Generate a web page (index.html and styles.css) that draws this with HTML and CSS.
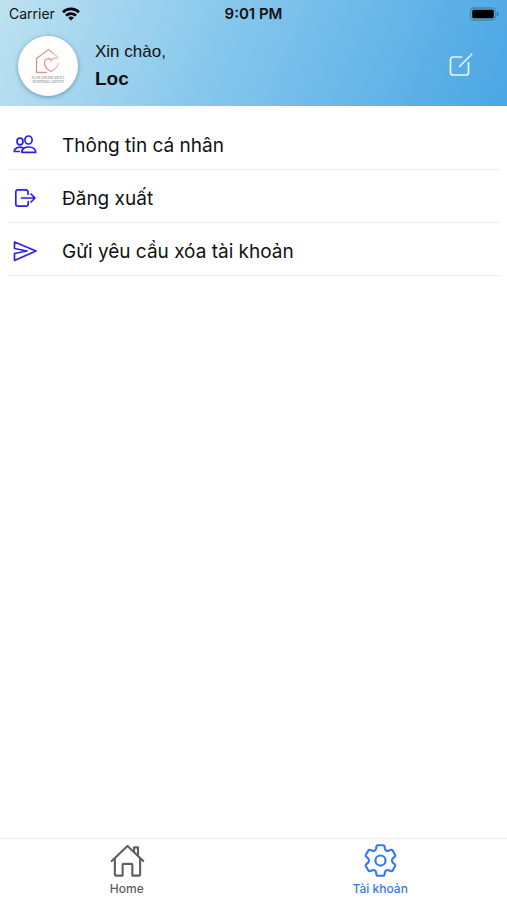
FILE: index.html
```html
<!DOCTYPE html>
<html lang="vi">
<head>
<meta charset="utf-8">
<meta name="viewport" content="width=device-width, initial-scale=1">
<title>Tài khoản</title>
<link rel="stylesheet" href="styles.css">
</head>
<body>
<header class="header">
  <div class="status">
    <div class="carrier">
      <span>Carrier</span>
      <svg width="18" height="14" viewBox="0 0 18 14" fill="none" stroke="#000" stroke-width="2.6" aria-hidden="true">
        <path d="M1 5.2a11.4 11.4 0 0 1 16 0"/>
        <path d="M4 8.6a7.2 7.2 0 0 1 10 0"/>
        <path d="M9 13.6 6.2 10.8a4 4 0 0 1 5.6 0z" fill="#000" stroke="none"/>
      </svg>
    </div>
    <time class="clock">9:01 PM</time>
    <div class="battery">
      <svg width="30" height="14" viewBox="0 0 30 14" aria-hidden="true">
        <rect x="1.500" y="1" width="25" height="12" rx="3.5" fill="none" stroke="#4a86a8" stroke-width="1.3"/>
        <rect x="3.200" y="2.700" width="21.600" height="8.600" rx="1.600" fill="#000"/>
        <path d="M28 4.800a2.400 2.400 0 0 1 0 4.400z" fill="#386f8f"/>
      </svg>
    </div>
  </div>
  <div class="profile">
    <div class="avatar">
      <svg width="60" height="60" viewBox="0 0 60 60" role="img" aria-label="Kindergarten">
        <defs>
          <linearGradient id="rose" gradientUnits="userSpaceOnUse" x1="18" y1="0" x2="43" y2="0"><stop offset="0" stop-color="#dd8f8f"/><stop offset=".6" stop-color="#e89a9a"/><stop offset="1" stop-color="#f9e4e4"/></linearGradient>
        </defs>
        <g fill="none" stroke="url(#rose)" stroke-width="1.3">
          <path d="M29 36.500H18.500V22.500L30.500 13.500 41 22"/>
          <path d="M33 35.500c-3.500-2-6.500-5-6.500-8.500 0-4.500 5-6 7-2.500 1.500-2.500 4-3 6.500-1.500"/>
          <path d="M33 35.500c4-2 7-5 8-9"/>
        </g>
        <text x="30" y="43" class="logo-text">HANATUDE BETA</text>
        <text x="30" y="47" class="logo-text">KINDERGARTEN</text>
      </svg>
    </div>
    <div class="greeting">
      <p class="hello">Xin chào,</p>
      <p class="name">Loc</p>
    </div>
    <button class="edit" type="button" aria-label="Chỉnh sửa">
      <svg width="26" height="26" viewBox="0 0 26 26" fill="none" stroke="#e6f4fc" stroke-width="1.700" stroke-linecap="round" stroke-linejoin="round">
        <path d="M14.500 5H6a2.500 2.500 0 0 0-2.500 2.500v13A2.500 2.500 0 0 0 6 23h13a2.500 2.500 0 0 0 2.500-2.500V10.500"/>
        <path d="M12.500 14.500 23 4M24.200 2.700l.5-.5"/>
      </svg>
    </button>
  </div>
</header>

<main class="menu">
  <a class="row" href="#profile">
    <svg class="row-icon" viewBox="0 0 24 24" aria-hidden="true">
      <ellipse cx="15.500" cy="7" rx="3.600" ry="4"/>
      <path d="M8.800 19.300c0-3.600 3.200-5.300 6.800-5.300s6.900 1.700 7.100 5.300z"/>
      <ellipse cx="7" cy="8.500" rx="3" ry="3.300"/>
      <path d="M9.800 14.800C6 13.300 1.300 14.800 1.300 18.500h5"/>
    </svg>
    <span>Thông tin cá nhân</span>
  </a>
  <a class="row" href="#logout">
    <svg class="row-icon" viewBox="0 0 24 24" aria-hidden="true">
      <path d="M15 8.300V6a2.200 2.200 0 0 0-2.200-2.200H5A2.200 2.200 0 0 0 2.800 6v12A2.200 2.200 0 0 0 5 20.200h8a2.200 2.200 0 0 0 2.200-2.200v-2.300"/>
      <path d="M8.500 12h13.200M18 8l4 4-4 4"/>
    </svg>
    <span>Đăng xuất</span>
  </a>
  <a class="row" href="#delete">
    <svg class="row-icon" viewBox="0 0 24 24" aria-hidden="true">
      <path d="M1.500 3 23 12 1.500 21.500V14.500L14 12 1.500 9.500z"/>
    </svg>
    <span>Gửi yêu cầu xóa tài khoản</span>
  </a>
</main>

<nav class="tabs">
  <a class="tab" href="#home">
    <svg width="36" height="36" viewBox="0 0 36 36" fill="none" stroke="currentColor" stroke-width="2.2" stroke-linecap="round" stroke-linejoin="round" aria-hidden="true">
      <path d="M2.300 18.500 18.500 3l16.200 15.500"/>
      <path d="M5.500 16v16.500a1 1 0 0 0 1 1h7V22.500a1 1 0 0 1 1-1h8a1 1 0 0 1 1 1v11h7a1 1 0 0 0 1-1V16"/>
      <path d="M25.300 8.500V4.500h4V12.500"/>
    </svg>
    <span>Home</span>
  </a>
  <a class="tab tab-active" href="#account" aria-current="page">
    <svg width="36" height="36" viewBox="-18.500 -18 36 36" fill="none" stroke="currentColor" stroke-width="2.2" stroke-linejoin="round" aria-hidden="true">
      <path d="M-3 -15.700H3Q3.800 -15.700 4 -14.900L4.600 -12Q4.900 -10.800 5.900 -10.200T8.300 -10L11.100 -11Q11.900 -11.200 12.300 -10.500L15.100 -5.600Q15.500 -4.800 14.900 -4.200L12.700 -2.200Q11.800 -1.200 11.800 0T12.700 2.200L14.900 4.200Q15.500 4.800 15.100 5.600L12.300 10.500Q11.900 11.200 11.100 11L8.300 10Q6.900 9.600 5.900 10.200T4.600 12L4 14.900Q3.800 15.700 3 15.700H-3Q-3.800 15.700 -4 14.900L-4.600 12Q-4.900 10.800 -5.900 10.200T-8.300 10L-11.100 11Q-11.900 11.200 -12.300 10.500L-15.100 5.600Q-15.500 4.800 -14.900 4.200L-12.700 2.200Q-11.800 1.200 -11.800 0T-12.700 -2.200L-14.900 -4.200Q-15.500 -4.800 -15.100 -5.600L-12.300 -10.500Q-11.900 -11.200 -11.100 -11L-8.300 -10Q-6.900 -9.600 -5.900 -10.200T-4.600 -12L-4 -14.900Q-3.800 -15.700 -3 -15.700Z"/>
      <circle r="5.200"/>
    </svg>
    <span>Tài khoản</span>
  </a>
</nav>
</body>
</html>
```
FILE: styles.css
```css
* {
  box-sizing: border-box;
}

body {
  margin: 0;
  min-height: 100vh;
  display: flex;
  flex-direction: column;
  background: #fff;
  color: #111;
  font-family: Inter, "Liberation Sans", sans-serif;
}

a {
  color: inherit;
  text-decoration: none;
}

.header {
  padding-bottom: 4px;
  background: linear-gradient(112deg, #bee2f1, #84c6ec 45%, #4aa6e4);
}

.status {
  display: grid;
  grid-template-columns: 1fr auto 1fr;
  align-items: center;
  height: 27px;
  padding: 0 8px;
}

.carrier {
  display: flex;
  align-items: center;
  gap: 7px;
  padding-left: 1px;
  font-size: 14px;
}

.clock {
  font-size: 15px;
  font-weight: 600;
}

.battery {
  display: flex;
  justify-content: flex-end;
}

.profile {
  display: flex;
  align-items: center;
  height: 75px;
  padding: 1px 34px 0 18px;
}

.avatar {
  width: 60px;
  height: 60px;
  margin-top: 2px;
  border-radius: 50%;
  background: #fff;
  box-shadow: 0 1px 4px rgba(40, 80, 110, 0.5);
}

.avatar svg {
  display: block;
}

.logo-text {
  font-family: "Liberation Serif", serif;
  font-size: 4px;
  text-anchor: middle;
  fill: #777;
}

.greeting {
  flex: 1;
  margin-left: 17px;
  font-family: "Liberation Sans", sans-serif;
}

.greeting p {
  margin: 0;
}

.hello {
  font-size: 17px;
  line-height: 28px;
}

.name {
  font-size: 19px;
  font-weight: 700;
  line-height: 26px;
}

.edit {
  display: flex;
  padding: 0;
  border: 0;
  background: none;
}

.menu {
  flex: 1;
  padding: 11px 7px 12px 8px;
}

.row {
  display: flex;
  align-items: center;
  gap: 25px;
  min-height: 53px;
  padding: 4px 5px 0;
  border-bottom: 1px solid #ececec;
  font-size: 19px;
}

.row-icon {
  width: 24px;
  height: 24px;
  fill: none;
  stroke: #2a20e8;
  stroke-width: 1.7;
  stroke-linecap: round;
  stroke-linejoin: round;
}

.tabs {
  display: flex;
  height: 62px;
  border-top: 1px solid #ececec;
}

.tab {
  flex: 1;
  display: flex;
  flex-direction: column;
  align-items: center;
  padding-top: 4px;
  color: #606060;
  font-size: 12px;
  font-weight: 500;
  line-height: 22px;
}

.tab-active {
  color: #357ae8;
}
```
